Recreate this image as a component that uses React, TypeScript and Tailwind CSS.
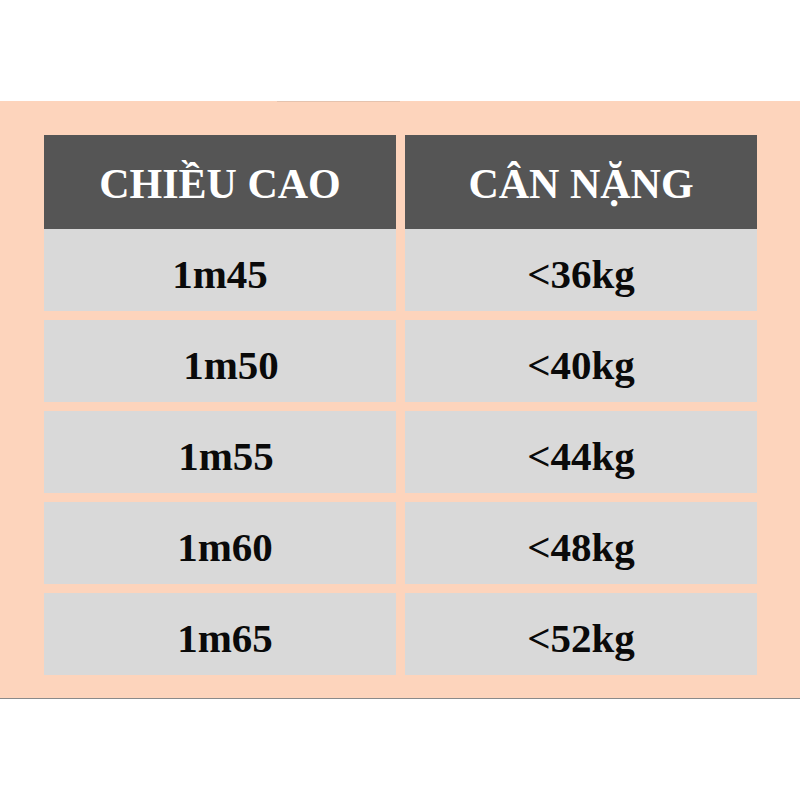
const rows = [
    { height: '1m45', weight: '<36kg', shift: 'pl-0' },
    { height: '1m50', weight: '<40kg', shift: 'pl-[22px]' },
    { height: '1m55', weight: '<44kg', shift: 'pl-[12px]' },
    { height: '1m60', weight: '<48kg', shift: 'pl-[10px]' },
    { height: '1m65', weight: '<52kg', shift: 'pl-[10px]' },
];

export default function App() {
    return (
        <div className="w-[800px] h-[800px] bg-white pt-[101px] font-['Liberation_Serif',serif]">
            {/* Dải nền màu hồng đào chứa bảng */}
            <div className="relative h-[598px] bg-[#fdd4bc] border-b border-[#8a8a8a] pt-[34px] pl-[44px]">
                <div className="absolute top-0 left-[277px] w-[123px] h-px bg-[#e6c3ae]" />

                <div className="flex gap-[9px]">
                    <div className="w-[352px] h-[94px] bg-[#555555] flex items-center justify-center">
                        <span className="text-white font-bold text-[42px] leading-none pt-[4px]">CHIỀU CAO</span>
                    </div>
                    <div className="w-[352px] h-[94px] bg-[#555555] flex items-center justify-center">
                        <span className="text-white font-bold text-[42px] leading-none pt-[4px]">CÂN NẶNG</span>
                    </div>
                </div>

                <div className="flex flex-col gap-[9px]">
                    {rows.map((row) => (
                        <div key={row.height} className="flex gap-[9px]">
                            <div className={`w-[352px] h-[82px] bg-[#d9d9d9] flex items-center justify-center ${row.shift}`}>
                                <span className="text-[#0a0a0a] font-bold text-[41px] leading-none pt-[8px]">{row.height}</span>
                            </div>
                            <div className="w-[352px] h-[82px] bg-[#d9d9d9] flex items-center justify-center">
                                <span className="text-[#0a0a0a] font-bold text-[41px] leading-none pt-[8px]">{row.weight}</span>
                            </div>
                        </div>
                    ))}
                </div>
            </div>
        </div>
    );
}
